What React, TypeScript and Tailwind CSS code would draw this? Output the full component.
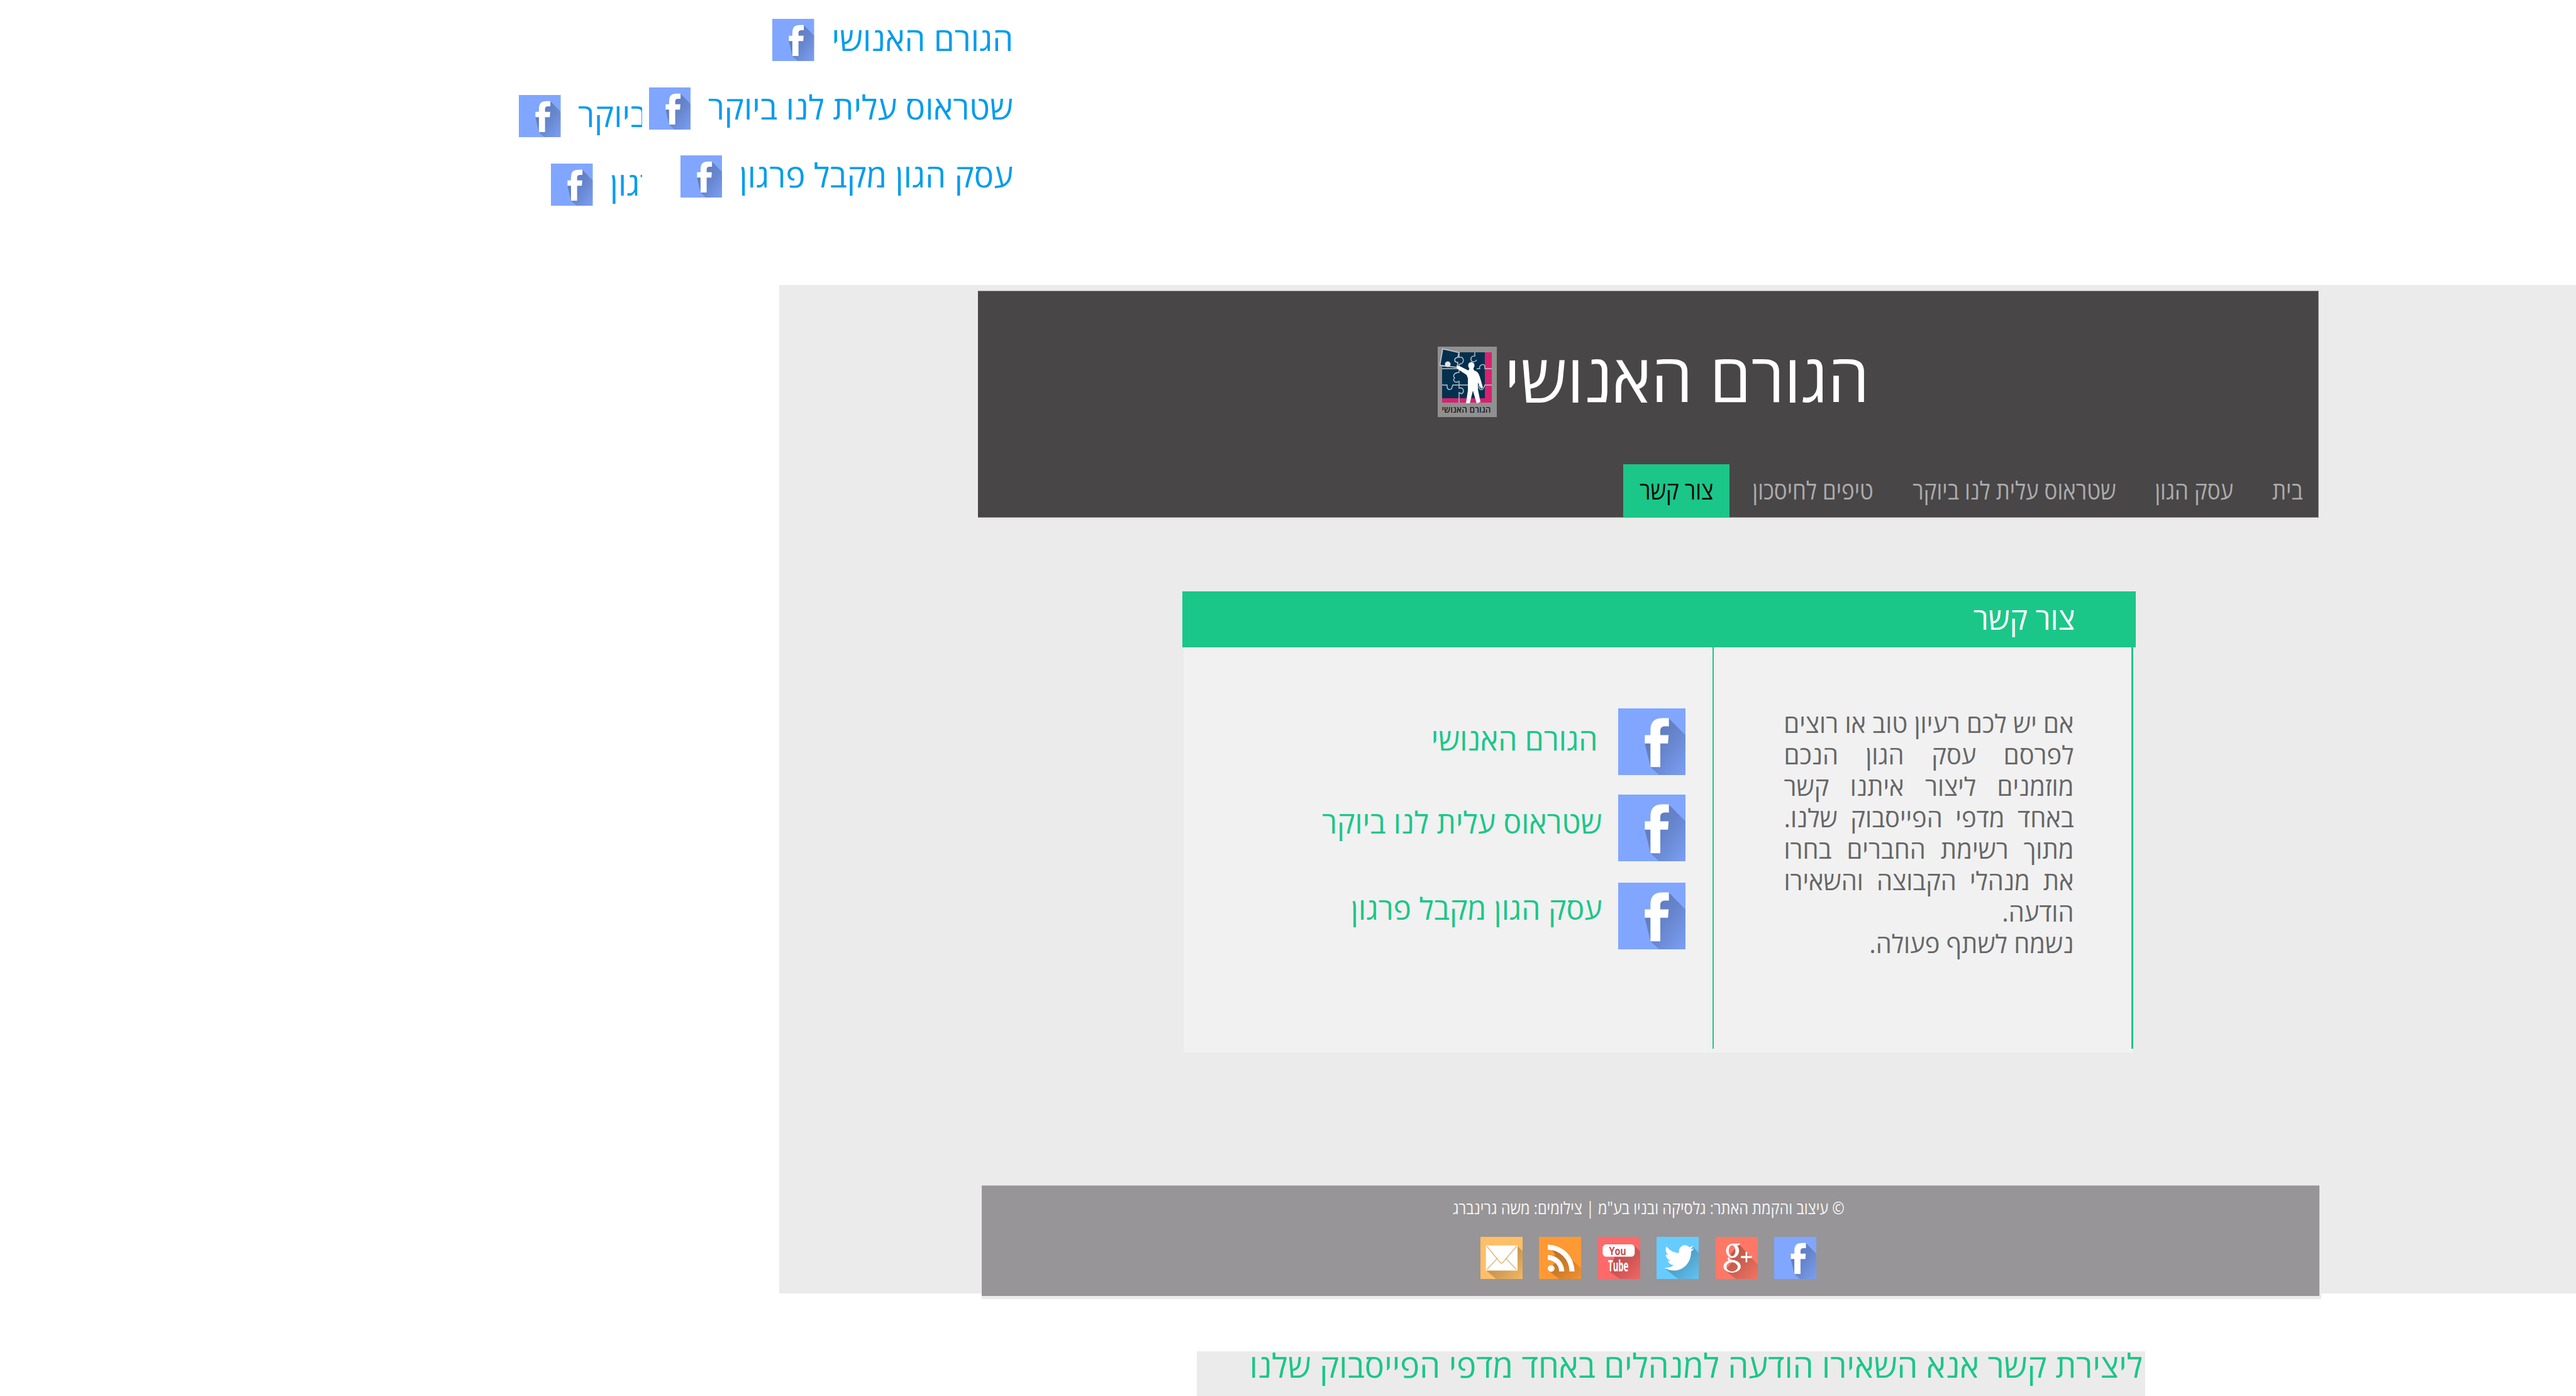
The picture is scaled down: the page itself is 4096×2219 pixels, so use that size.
import React from 'react';

type IconKind = 'facebook' | 'google' | 'twitter' | 'youtube' | 'rss' | 'mail';

const ICON_COLORS: Record<IconKind, string> = {
  facebook: '#80a6ff',
  google: '#ff7866',
  twitter: '#66ccff',
  youtube: '#ff6969',
  rss: '#ff9933',
  mail: '#ffbf66',
};

const SHADOWS: Record<IconKind, string> = {
  facebook: 'M75.4 15L100 40V100H61L48 88L39.6 52.6Z',
  google: 'M56 18L100 66V100H48L22 79L40 60L36 40Z',
  twitter: 'M87 24L100 38V100H51L22 77L50 60Z',
  youtube: 'M86 21L100 35V100H52L27 82L40 46Z',
  rss: 'M22 19L45 24L100 75V100H48L22 80L40 60L22 44L40 44Z',
  mail: 'M87 21L100 34V100H37L14 80Z',
};

function Glyph({ kind }: { kind: IconKind }) {
  switch (kind) {
    case 'facebook':
      return <path fill="#fff" d="M48 88V52.6H39.6V40H48V33C48 20 54 14.7 66 14.7H75.4V27H70C65 27 62.6 29 62.6 34V40H75L74 52.6H62.6V88Z" />;
    case 'google':
      return (
        <g fill="#fff">
          <path fillRule="evenodd" d="M40 16a15.500 17 0 1 0 .1 0ZM39 20a8 13 0 1 1-.1 0Z" />
          <path fillRule="evenodd" d="M39 55a20.500 15 0 1 0 .1 0ZM39 60a13.500 11 0 1 1-.1 0Z" />
          <path d="M40 16H59L55 20H48Z" />
          <path d="M33 47C30 51 34 54 42 57C50 60 55 63 54 70L46 62L32 57C27 54 27 50 33 47Z" />
          <path d="M60 45.500H71V36H75V45.500H86V50.500H75V60.500H71V50.500H60Z" />
        </g>
      );
    case 'twitter':
      return (
        <path
          fill="#fff"
          transform="translate(19 13) scale(2.92 3.08)"
          d="M23.953 4.57a10 10 0 01-2.825.775 4.958 4.958 0 002.163-2.723c-.951.555-2.005.959-3.127 1.184a4.92 4.92 0 00-8.384 4.482C7.69 8.095 4.067 6.13 1.64 3.162a4.822 4.822 0 00-.666 2.475c0 1.71.87 3.213 2.188 4.096a4.904 4.904 0 01-2.228-.616v.06a4.923 4.923 0 003.946 4.827 4.996 4.996 0 01-2.212.085 4.936 4.936 0 004.604 3.417 9.867 9.867 0 01-6.102 2.105c-.39 0-.779-.023-1.17-.067a13.995 13.995 0 007.557 2.209c9.053 0 13.998-7.496 13.998-13.985 0-.21 0-.42-.015-.63A9.935 9.935 0 0024 4.59z"
        />
      );
    case 'youtube':
      return (
        <g direction="ltr" fontFamily="'Open Sans', sans-serif" fontWeight="700">
          <rect x="11" y="18" width="76" height="29" rx="8" fill="#fff" />
          <text x="26" y="43" fontSize="26" fill="#c25055" textLength="41" lengthAdjust="spacingAndGlyphs">You</text>
          <text x="24" y="82.500" fontSize="38" fill="#fff" textLength="48" lengthAdjust="spacingAndGlyphs">Tube</text>
        </g>
      );
    case 'rss':
      return (
        <g fill="#fff">
          <circle cx="29" cy="75" r="8" />
          <path d="M21 43A39 39 0 0 1 60 82H48A27 27 0 0 0 21 55Z" />
          <path d="M21 18.500A63.500 63.500 0 0 1 84.500 82H72.500A51.500 51.500 0 0 0 21 30.500Z" />
        </g>
      );
    case 'mail':
      return (
        <g>
          <rect x="13" y="20.500" width="75" height="59.500" fill="#fff" />
          <path fill="none" stroke="#e3bd84" strokeWidth="2.500" d="M15 22L46 60L50 63L54 60L86 22M15 78L41 50M86 78L59 50" />
        </g>
      );
  }
}

function SocialIcon({ kind, className }: { kind: IconKind; className: string }) {
  const id = React.useId();
  return (
    <svg viewBox="0 0 100 100" preserveAspectRatio="none" className={`block shrink-0 ${className}`}>
      <defs>
        <linearGradient id={id} x1="0.2" y1="0.2" x2="1" y2="1">
          <stop offset="0" stopColor="#000" stopOpacity="0.26" />
          <stop offset="0.4" stopColor="#000" stopOpacity="0.2" />
          <stop offset="1" stopColor="#000" stopOpacity="0.04" />
        </linearGradient>
      </defs>
      <rect width="100" height="100" fill={ICON_COLORS[kind]} />
      <path d={SHADOWS[kind]} fill={`url(#${id})`} />
      <Glyph kind={kind} />
    </svg>
  );
}

function Logo() {
  return (
    <svg viewBox="0 0 94 112" className="block h-[112px] w-[94px] shrink-0">
      <rect width="94" height="112" fill="#909090" />
      <rect x="7" y="9" width="79" height="80" fill="#d6226f" />
      <rect x="7" y="9" width="68" height="73" fill="#04304e" />
      <path d="M3 8H36V36H3Z" fill="#909090" />
      <path d="M24 9H36V36H24Z" fill="#04304e" />
      <path d="M7 32H34V40H7Z" fill="#04304e" />
      <g fill="none" stroke="#b9c6d0" strokeWidth="1.400">
        <path d="M59 9V15C54 14 51 19 54 23C56 25 61 24 62 21" />
        <path d="M34 9V17C41 15 43 23 38 27L34 28V41C27 41 23 46 27 50C23 53 27 59 34 55V66C40 64 44 71 38 75L34 73V89" />
        <path d="M7 35H34M62 35H67C65 29 74 26 75 31V35H86" />
        <path d="M7 61H15C14 67 18 70 22 67L24 61H48M66 61C64 68 70 71 73 66L75 61H86" />
      </g>
      <path d="M8 3.500L34 9.500L32 17C25 18 26 25 32 25L31 33L3.500 29.500Z" fill="#04304e" stroke="#c3ccd2" strokeWidth="1.600" />
      <circle cx="16" cy="28" r="4.500" fill="#dfe5ea" />
      <ellipse cx="53.500" cy="30" rx="5" ry="5.500" fill="#fff" />
      <path fill="#fff" d="M30 30L35 31L49 38L51 33H56L58 38C63 39 65 42 67 48L72 65L69 67L64 57V68L68 88L62 90L56 70L51 90H45L48 70V50L46 45L31 35Z" />
      <text x="45.500" y="104.500" textAnchor="middle" direction="rtl" fontFamily="'Open Sans', sans-serif" fontWeight="600" fontSize="13.500" fill="#1c1c1c" textLength="78" lengthAdjust="spacingAndGlyphs">
        הגורם האנושי
      </text>
    </svg>
  );
}

const PAGES = ['הגורם האנושי', 'שטראוס עלית לנו ביוקר', 'עסק הגון מקבל פרגון'];

const NAV = [
  { label: 'בית', width: 'w-[97px]' },
  { label: 'עסק הגון', width: 'w-[174px]' },
  { label: 'שטראוס עלית לנו ביוקר', width: 'w-[373px]' },
  { label: 'טיפים לחיסכון', width: 'w-[240px]' },
  { label: 'צור קשר', width: 'w-[169px]', active: true },
];

const CONTACTS = [
  { row: 'mb-[31px] gap-[32px]', text: 'leading-[97px]' },
  { row: 'mb-[34px] gap-[25px]', text: 'leading-[88px]' },
  { row: 'gap-[25px]', text: 'leading-[82px]' },
];

const PARAGRAPH = [
  'אם יש לכם רעיון טוב או רוצים',
  'לפרסם עסק הגון הנכם',
  'מוזמנים ליצור איתנו קשר',
  'באחד מדפי הפייסבוק שלנו.',
  'מתוך רשימת החברים בחרו',
  'את מנהלי הקבוצה והשאירו',
];

const FOOTER_ICONS: IconKind[] = ['facebook', 'google', 'twitter', 'youtube', 'rss', 'mail'];

export default function App() {
  return (
    <div dir="ltr" className="h-[2219px] w-[4096px] overflow-hidden bg-white font-['Open_Sans',sans-serif]">
      <section className="flex h-[453px] text-[52.300px] leading-[61px] whitespace-nowrap text-[#049cec]">
        <ul className="flex w-[1021px] flex-col gap-[41.700px] overflow-hidden pt-[151px]">
          <li className="ml-[825px] flex h-[67px] items-start gap-[27.500px]">
            <SocialIcon kind="facebook" className="h-[67px] w-[66.500px]" />
            <span>ביוקר</span>
          </li>
          <li className="ml-[876px] flex h-[67px] items-start gap-[27.500px]">
            <SocialIcon kind="facebook" className="h-[67px] w-[66.500px]" />
            <span>רגון</span>
          </li>
        </ul>
        <ul dir="rtl" className="flex w-[590px] flex-col gap-[41.700px] pt-[30px]">
          {PAGES.map((page) => (
            <li key={page} className="flex h-[67px] items-start gap-[27.500px]">
              <span>{page}</span>
              <SocialIcon kind="facebook" className="h-[67px] w-[66.500px]" />
            </li>
          ))}
        </ul>
      </section>

      <main className="ml-[1239px] flex h-[1603px] flex-col bg-[#ebebeb] pt-[9px]">
        <header dir="rtl" className="ml-[316px] h-[361px] w-[2132px] shrink-0 self-start border-y border-r border-[#969495] bg-[#484647] pt-[88px]">
          <div className="flex pr-[714px]">
            <h1 className="w-[592px] text-[107px] leading-[95px] whitespace-nowrap text-white">
              <span className="inline-block origin-right scale-x-[0.983]">הגורם האנושי</span>
            </h1>
            <Logo />
          </div>
          <nav className="mt-[75px] flex gap-[13px]">
            {NAV.map((item) => (
              <a
                key={item.label}
                className={`flex h-[84px] shrink-0 justify-center text-[39px] leading-[81px] whitespace-nowrap ${item.width} ${item.active ? 'bg-[#1bc689] text-black' : 'text-[#adacac]'}`}
              >
                <span className="inline-block scale-x-[0.893]">{item.label}</span>
              </a>
            ))}
          </nav>
        </header>

        <section dir="rtl" className="mt-[117px] ml-[640.500px] w-[1516px] shrink-0 self-start">
          <h2 className="h-[89px] bg-[#1bc689] pr-[96px] text-[48px] leading-[86px] text-white">צור קשר</h2>
          <div className="mr-[4px] ml-[2px] flex h-[644px] bg-[#f1f1f1]">
            <div className="h-[638px] w-[669px] shrink-0 border-r-[3px] border-l-2 border-[#1bc689] pt-[95.500px] pr-[91px] text-[39.900px] leading-[50.100px] text-[#666666]">
              <div className="w-[461px]">
                {PARAGRAPH.map((line) => (
                  <p key={line} className="text-justify whitespace-nowrap [text-align-last:justify]">
                    {line}
                  </p>
                ))}
                <p>הודעה.</p>
                <p>נשמח לשתף פעולה.</p>
              </div>
            </div>
            <ul className="flex-1 pt-[97px] pr-[43px]">
              {CONTACTS.map((contact, i) => (
                <li key={PAGES[i]} className={`flex h-[106px] items-start text-[48px] whitespace-nowrap text-[#1bc689] ${contact.row}`}>
                  <SocialIcon kind="facebook" className="h-[106px] w-[107px]" />
                  <span className={contact.text}>{PAGES[i]}</span>
                </li>
              ))}
            </ul>
          </div>
        </section>

        <div className="mt-[211px] ml-[322px] w-[2130px] shrink-0 self-start bg-[#ebebeb] pb-[5px]">
          <footer dir="rtl" className="h-[176px] w-[2127px] border-t border-[#babbba] bg-[#979597]">
            <p className="pr-[755px] text-[27px] leading-[69px] whitespace-nowrap text-[#f6f6f6]">
              <span className="inline-block origin-right scale-x-[0.870]">
                © עיצוב והקמת האתר: גלסיקה ובניו בע"מ | צילומים: משה גרינברג
              </span>
            </p>
            <div className="mt-[12px] flex gap-[26.400px] pr-[800px]">
              {FOOTER_ICONS.map((kind) => (
                <SocialIcon key={kind} kind={kind} className="h-[67px] w-[67px]" />
              ))}
            </div>
          </footer>
        </div>
      </main>

      <div dir="rtl" className="mt-[92px] ml-[1903px] h-[71px] w-[1508px] bg-[#ebebeb] pr-[4px] text-[52.250px] leading-[44px] whitespace-nowrap text-[#1bc689]">
        ליצירת קשר אנא השאירו הודעה למנהלים באחד מדפי הפייסבוק שלנו
      </div>
    </div>
  );
}
